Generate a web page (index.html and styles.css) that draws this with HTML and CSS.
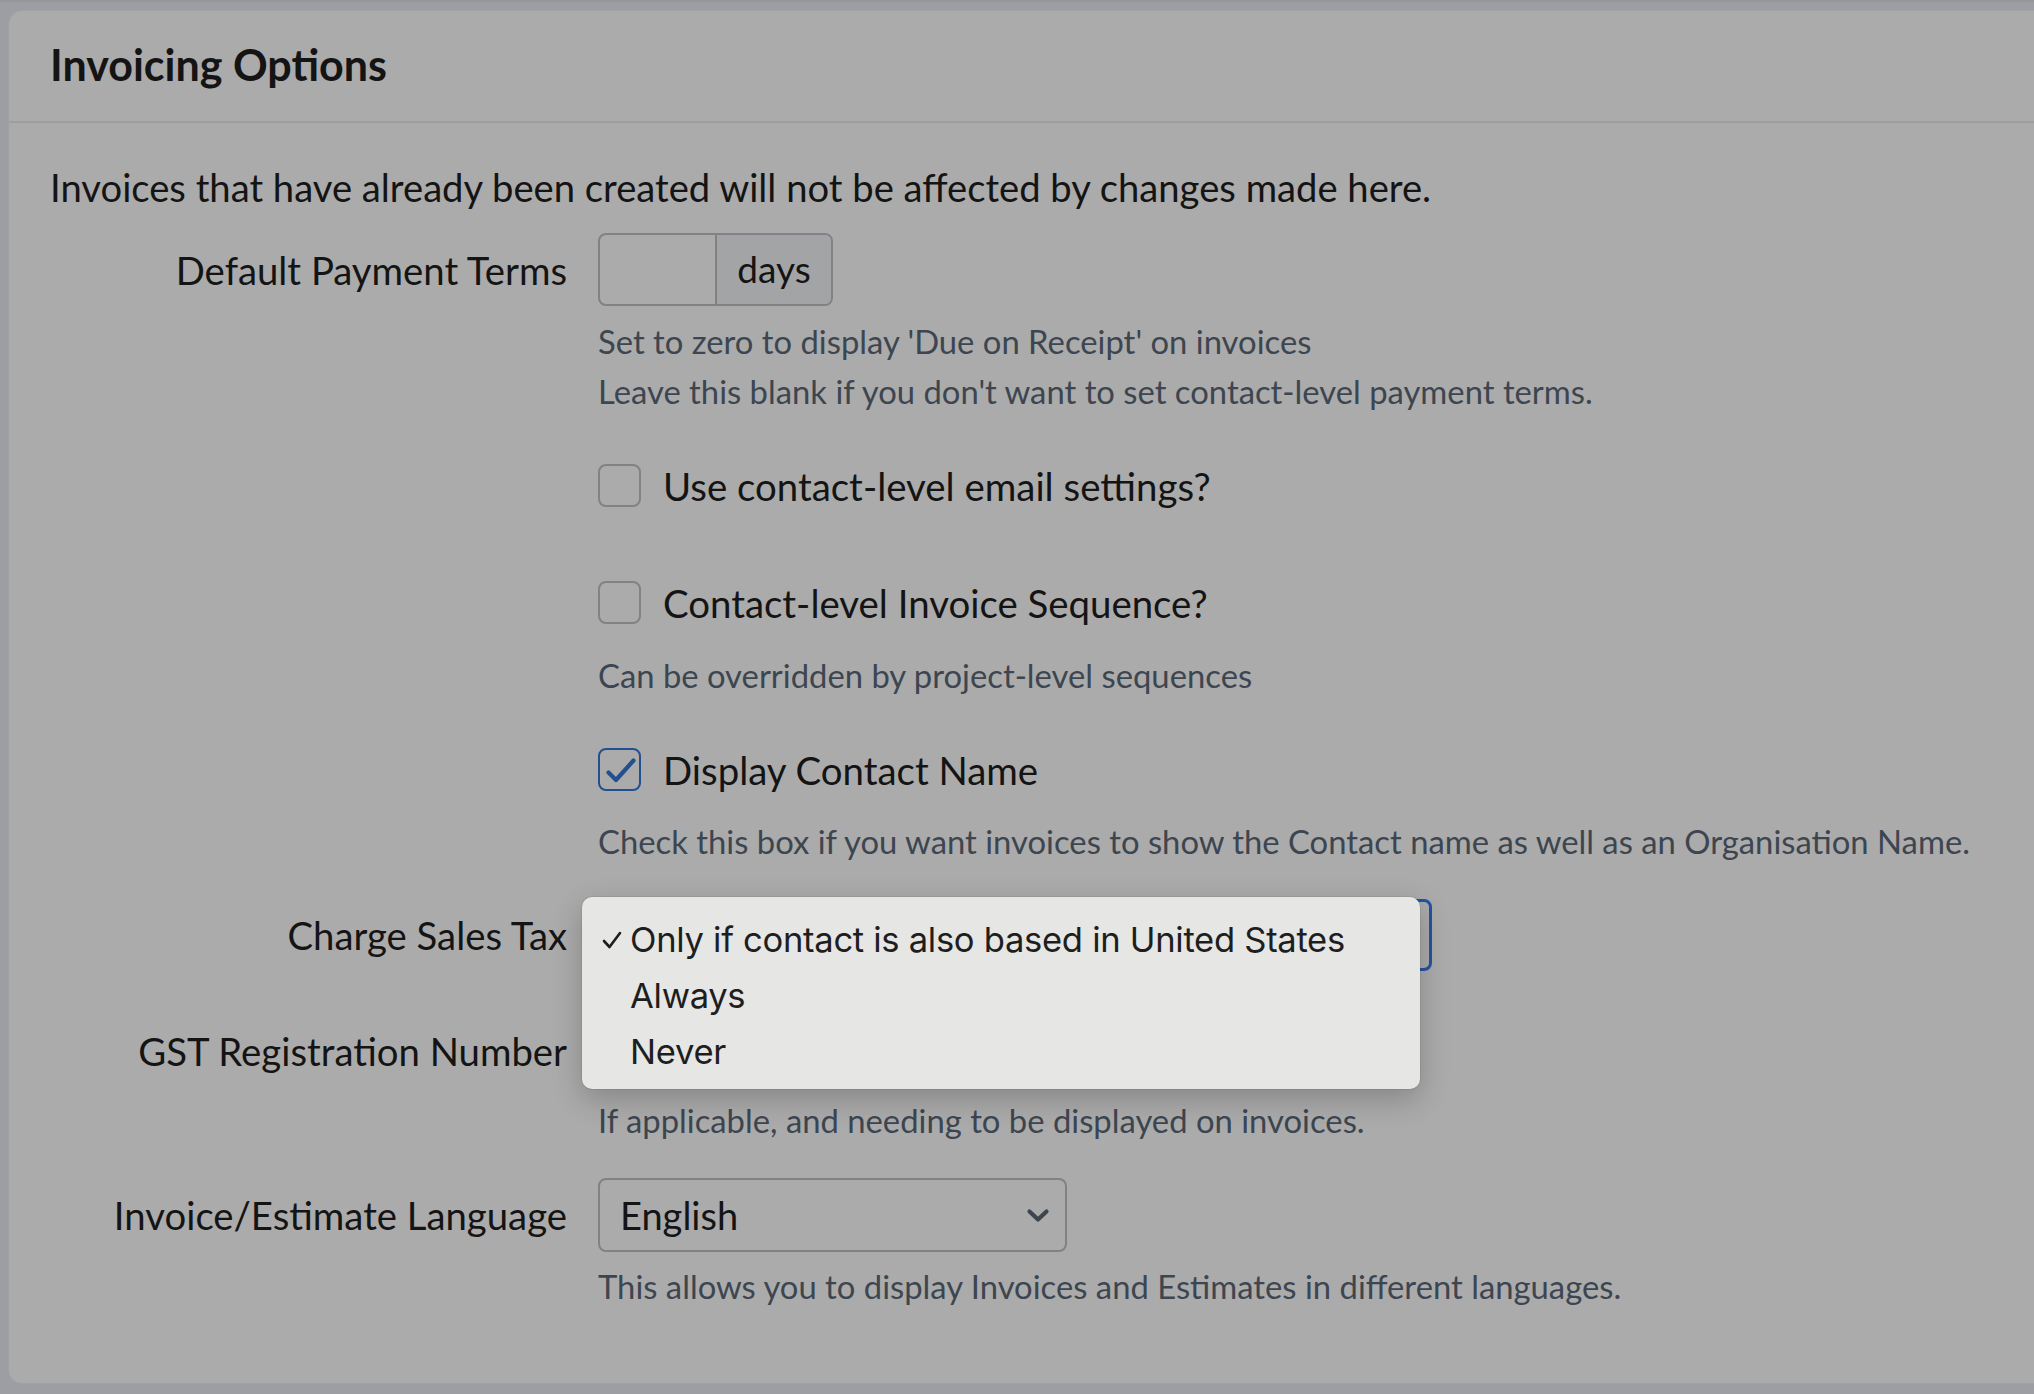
FILE: index.html
```html
<!DOCTYPE html>
<html>
<head>
<meta charset="utf-8">
<link rel="stylesheet" href="styles.css">
</head>
<body>
<div class="page">
  <div class="card">
    <div class="card-header"><h2 class="title">Invoicing Options</h2></div>
    <div class="card-body">
      <p class="intro">Invoices that have already been created will not be affected by changes made here.</p>

      <div class="row row-terms">
        <label class="label">Default Payment Terms</label>
        <div class="control">
          <div class="input-group">
            <div class="input-part"></div>
            <div class="addon">days</div>
          </div>
        </div>
      </div>
      <div class="help help-terms">
        <div>Set to zero to display 'Due on Receipt' on invoices</div>
        <div>Leave this blank if you don't want to set contact-level payment terms.</div>
      </div>

      <div class="check-row cr1">
        <span class="checkbox"></span><span class="check-label">Use contact-level email settings?</span>
      </div>
      <div class="check-row cr2">
        <span class="checkbox"></span><span class="check-label">Contact-level Invoice Sequence?</span>
      </div>
      <div class="help help-seq">Can be overridden by project-level sequences</div>

      <div class="check-row cr3">
        <span class="checkbox checked"><svg viewBox="0 0 39 39" width="39" height="39"><path d="M8.5 22.5 L16 30 L33.5 10.5" fill="none" stroke="#22508f" stroke-width="4.2" stroke-linecap="round" stroke-linejoin="round"/></svg></span><span class="check-label">Display Contact Name</span>
      </div>
      <div class="help help-name">Check this box if you want invoices to show the Contact name as well as an Organisation Name.</div>

      <div class="row row-tax">
        <label class="label">Charge Sales Tax</label>
        <div class="control">
          <div class="select-wrap">
            <div class="select focused"></div>
            <div class="menu">
              <div class="menu-item"><span class="tick"><svg viewBox="0 0 20 18" width="20" height="18"><path d="M2 10 L7.5 16 L18 2" fill="none" stroke="#1e1e1e" stroke-width="2.6" stroke-linecap="round" stroke-linejoin="round"/></svg></span>Only if contact is also based in United States</div>
              <div class="menu-item"><span class="tick"></span>Always</div>
              <div class="menu-item"><span class="tick"></span>Never</div>
            </div>
          </div>
        </div>
      </div>

      <div class="row row-gst">
        <label class="label">GST Registration Number</label>
        <div class="control"><div class="text-input"></div></div>
      </div>
      <div class="help help-gst">If applicable, and needing to be displayed on invoices.</div>

      <div class="row row-lang">
        <label class="label">Invoice/Estimate Language</label>
        <div class="control">
          <div class="select lang">
            <span>English</span>
            <svg class="chev" viewBox="0 0 24 16" width="24" height="16"><path d="M3.5 3.5 L12 11.5 L20.5 3.5" fill="none" stroke="#3e454d" stroke-width="4.2" stroke-linecap="round" stroke-linejoin="round"/></svg>
          </div>
        </div>
      </div>
      <div class="help help-lang">This allows you to display Invoices and Estimates in different languages.</div>
    </div>
  </div>
</div>
</body>
</html>
```

FILE: styles.css
```css
html, body {
  margin: 0;
  padding: 0;
  background: #9c9ea3;
  overflow: hidden;
}
body {
  font-family: Lato, "Open Sans", sans-serif;
  color: #141414;
  width: 2034px;
  height: 1394px;
}
.page {
  padding: 8px 0 0 8px;
  border-top: 2px solid #94969b;
  box-sizing: border-box;
}
.card {
  width: 2060px;
  height: 1374px;
  box-sizing: border-box;
  background: #ababab;
  border: 1px solid #a0a1a5;
  border-radius: 14px 0 0 14px;
}
.card-header {
  height: 112px;
  border-bottom: 2px solid #9e9ea2;
  display: flex;
  align-items: center;
  padding-left: 41px;
  box-sizing: border-box;
}
.title {
  margin: 0;
  font-size: 43px;
  font-weight: 700;
  letter-spacing: 0;
  padding-bottom: 3px;
}
.card-body {
  padding-left: 41px;
}
.intro {
  margin: 39px 0 0;
  font-size: 38.2px;
  line-height: 50px;
}
.row {
  display: grid;
  grid-template-columns: 517px 1fr;
  column-gap: 31px;
  align-items: center;
}
.label {
  text-align: right;
  font-size: 38.3px;
  line-height: 50px;
}
.row-terms { margin-top: 21px; }
.input-group {
  display: flex;
  width: 235px;
  height: 73px;
  box-sizing: border-box;
  border: 2px solid #808286;
  border-radius: 8px;
  overflow: hidden;
}
.input-part {
  width: 115px;
  border-right: 2px solid #808286;
}
.addon {
  flex: 1;
  background: #a3a4a6;
  display: flex;
  align-items: center;
  justify-content: center;
  font-size: 37px;
  padding-bottom: 2px;
}
.help {
  margin-left: 548px;
  color: #3d4650;
  font-size: 32.8px;
  line-height: 50px;
}
.help-terms { margin-top: 11px; }
.check-row {
  margin-left: 548px;
  display: flex;
  align-items: center;
  height: 44px;
}
.cr1 { margin-top: 46px; }
.cr2 { margin-top: 73px; }
.cr3 { margin-top: 46px; }
.help-seq { margin-top: 27px; }
.help-name { margin-top: 26px; }
.checkbox {
  width: 43px;
  height: 43px;
  box-sizing: border-box;
  border: 2px solid #818286;
  border-radius: 8px;
  display: flex;
  align-items: center;
  justify-content: center;
  flex: none;
}
.checkbox.checked {
  border-color: #22508f;
}
.checkbox svg { display: block; }
.check-label {
  margin-left: 22px;
  font-size: 38.4px;
  line-height: 50px;
  padding-top: 2px;
}
.row-tax { margin-top: 32px; }
.select-wrap {
  position: relative;
  width: 834px;
  height: 72px;
}
.select {
  box-sizing: border-box;
  height: 72px;
  border: 2px solid #808286;
  border-radius: 8px;
}
.select.focused {
  border: 3px solid #2553a0;
  height: 72px;
}
.menu {
  position: absolute;
  left: -16px;
  top: -2px;
  width: 838px;
  height: 192px;
  box-sizing: border-box;
  background: #e6e6e5;
  border-radius: 10px;
  box-shadow: 0 10px 30px rgba(0,0,0,0.22), 0 0 0 1px rgba(0,0,0,0.06);
  padding-top: 14px;
  font-family: Inter, "Liberation Sans", sans-serif;
  color: #1e1e1e;
}
.menu-item {
  height: 56px;
  line-height: 56px;
  font-size: 34.6px;
  display: flex;
  align-items: center;
  letter-spacing: -0.3px;
}
.tick {
  width: 48px;
  height: 56px;
  display: flex;
  align-items: center;
  justify-content: flex-end;
  padding-right: 8px;
  box-sizing: border-box;
  flex: none;
}
.tick svg { display: block; margin-top: 2px; }
.row-gst { margin-top: 44px; }
.text-input {
  width: 700px;
  height: 72px;
  box-sizing: border-box;
  border: 2px solid #808286;
  border-radius: 8px;
}
.help-gst { margin-top: 9px; }
.row-lang { margin-top: 32px; }
.select.lang {
  width: 469px;
  height: 74px;
  display: flex;
  align-items: center;
  justify-content: space-between;
  padding: 0 15px 0 20px;
  font-size: 38px;
}
.chev { display: block; margin-top: 2px; }
.help-lang { margin-top: 10px; }
```
